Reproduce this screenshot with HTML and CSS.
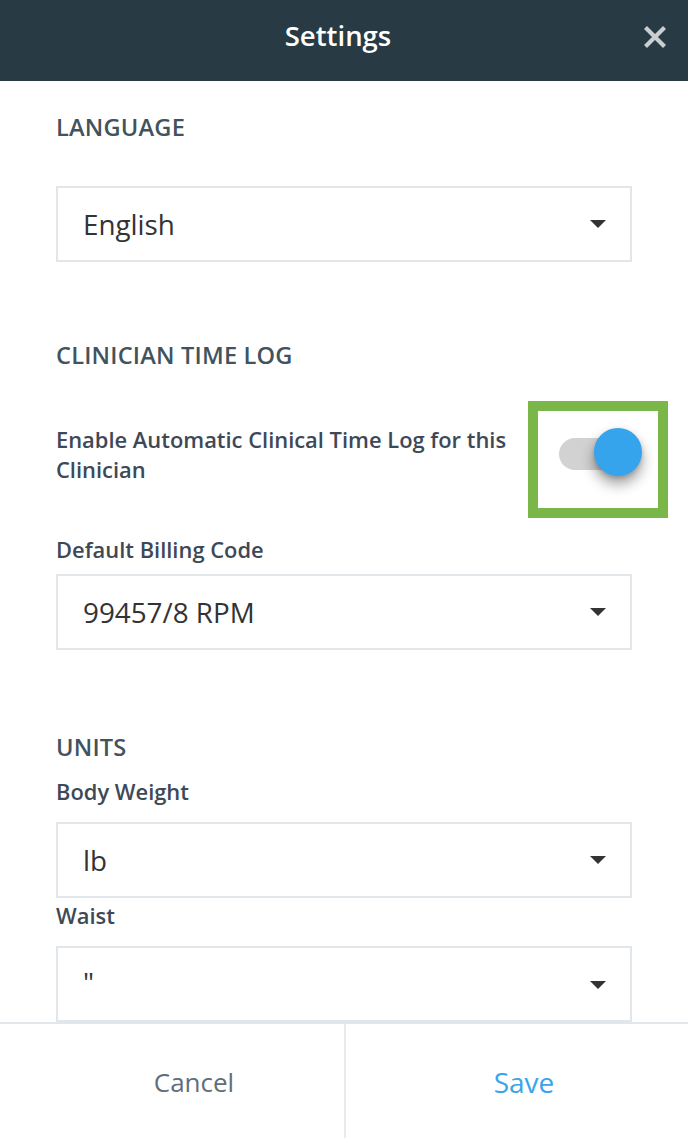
FILE: index.html
```html
<!DOCTYPE html>
<html lang="en">
<head>
<meta charset="utf-8">
<title>Settings</title>
<link rel="stylesheet" href="styles.css">
</head>
<body>
<div class="app">
  <header class="topbar">
    <h1 class="title">Settings</h1>
    <button class="close" aria-label="Close">
      <svg width="24" height="24" viewBox="0 0 24 24"><path d="M2.5 2.5 L21.5 21.5 M21.5 2.5 L2.5 21.5" stroke="#c9ced1" stroke-width="4.2" stroke-linecap="butt" fill="none"/></svg>
    </button>
  </header>

  <main class="content">
    <h2 class="section section-first">LANGUAGE</h2>
    <div class="select select-lang"><span class="value">English</span><span class="caret"></span></div>

    <h2 class="section section-clin">CLINICIAN TIME LOG</h2>
    <div class="toggle-row">
      <p class="toggle-label">Enable Automatic Clinical Time Log for this Clinician</p>
      <div class="highlight">
        <div class="track"><span class="knob"></span></div>
      </div>
    </div>

    <label class="field-label label-billing">Default Billing Code</label>
    <div class="select"><span class="value">99457/8 RPM</span><span class="caret"></span></div>

    <h2 class="section section-units">UNITS</h2>
    <label class="field-label label-weight">Body Weight</label>
    <div class="select"><span class="value">lb</span><span class="caret"></span></div>

    <label class="field-label label-waist">Waist</label>
    <div class="select select-waist"><span class="value value-top">"</span><span class="caret"></span></div>
  </main>

  <footer class="footer">
    <button class="btn btn-cancel">Cancel</button>
    <button class="btn btn-save">Save</button>
  </footer>
</div>
</body>
</html>
```
FILE: styles.css
```css
* { box-sizing: border-box; }
html, body { margin: 0; padding: 0; }
body {
  font-family: "Open Sans", "Noto Sans", sans-serif;
  background: #ffffff;
  color: #333;
}
.app {
  width: 688px;
  height: 1138px;
  display: flex;
  flex-direction: column;
  overflow: hidden;
}
.topbar {
  height: 81px;
  flex: none;
  background: #283a44;
  display: flex;
  align-items: center;
  justify-content: center;
  position: relative;
}
.title {
  margin: 0;
  font-size: 27.5px;
  font-weight: 600;
  color: #ffffff;
  line-height: 34px;
  margin-top: -10px;
  margin-left: -12px;
}
.close {
  position: absolute;
  right: 21px;
  top: 25px;
  width: 24px;
  height: 24px;
  padding: 0;
  border: 0;
  background: none;
  display: flex;
}
.content {
  flex: 1;
  overflow: hidden;
  padding: 0 56px;
  display: flex;
  flex-direction: column;
}
.section {
  margin: 0;
  font-size: 23.6px;
  line-height: 28px;
  font-weight: 600;
  color: #42535d;
  letter-spacing: 0.2px;
}
.section-first { margin-top: 32px; }
.section-clin { margin-top: 79px; }
.section-units { margin-top: 83px; }
.select {
  flex: none;
  height: 76px;
  border: 2px solid #e1e6eb;
  display: flex;
  align-items: center;
  justify-content: space-between;
  padding: 0 24px 0 25px;
  background: #fff;
}
.select-lang { margin-top: 45px; }
.value {
  font-size: 27.8px;
  color: #333;
  line-height: 34px;
}
.select-waist { align-items: flex-start; }
.select-waist .value-top { margin-top: 17px; }
.select-waist .caret { margin-top: 33px; }
.caret {
  width: 0;
  height: 0;
  border-left: 8px solid transparent;
  border-right: 8px solid transparent;
  border-top: 8px solid #333;
}
.toggle-row {
  margin-top: 32px;
  display: flex;
  align-items: flex-start;
  justify-content: space-between;
  margin-right: -36px;
}
.toggle-label {
  margin: 24px 0 0 0;
  width: 465px;
  font-size: 21.9px;
  line-height: 30px;
  font-weight: 600;
  color: #3e4957;
}
.highlight {
  flex: none;
  width: 140px;
  height: 117px;
  border: 10px solid #7ab648;
  padding: 27px 0 0 21px;
  background: #fff;
}
.track {
  position: relative;
  width: 70px;
  height: 32px;
  border-radius: 16px;
  background: #d2d2d2;
}
.knob {
  position: absolute;
  left: 35px;
  top: -10px;
  width: 48px;
  height: 48px;
  border-radius: 50%;
  background: #35a4ec;
  box-shadow: 0 8px 14px rgba(0, 0, 0, 0.38), 0 2px 4px rgba(0,0,0,0.15);
}
.field-label {
  display: block;
  font-size: 21.9px;
  line-height: 28px;
  font-weight: 600;
  color: #3e4957;
}
.label-billing { margin-top: 18px; }
.label-billing + .select { margin-top: 10px; }
.label-weight { margin-top: 17px; }
.label-weight + .select { margin-top: 16px; }
.label-waist { margin-top: 4px; }
.label-waist + .select { margin-top: 16px; }
.footer {
  flex: none;
  height: 116px;
  border-top: 2px solid #e1e6eb;
  display: flex;
  background: #fff;
}
.btn {
  flex: 1;
  border: 0;
  background: #fff;
  font-family: "Open Sans", "Noto Sans", sans-serif;
  font-size: 26px;
  padding: 2px 0 0 0;
}
.btn-cancel {
  color: #5f6e7a;
  border-right: 2px solid #e8eaec;
  padding-left: 44px;
  padding-right: 0;
  flex: 0 0 346px;
}
.btn-save {
  color: #3aa4e9;
  font-size: 28px;
  padding-left: 14px;
}
```
